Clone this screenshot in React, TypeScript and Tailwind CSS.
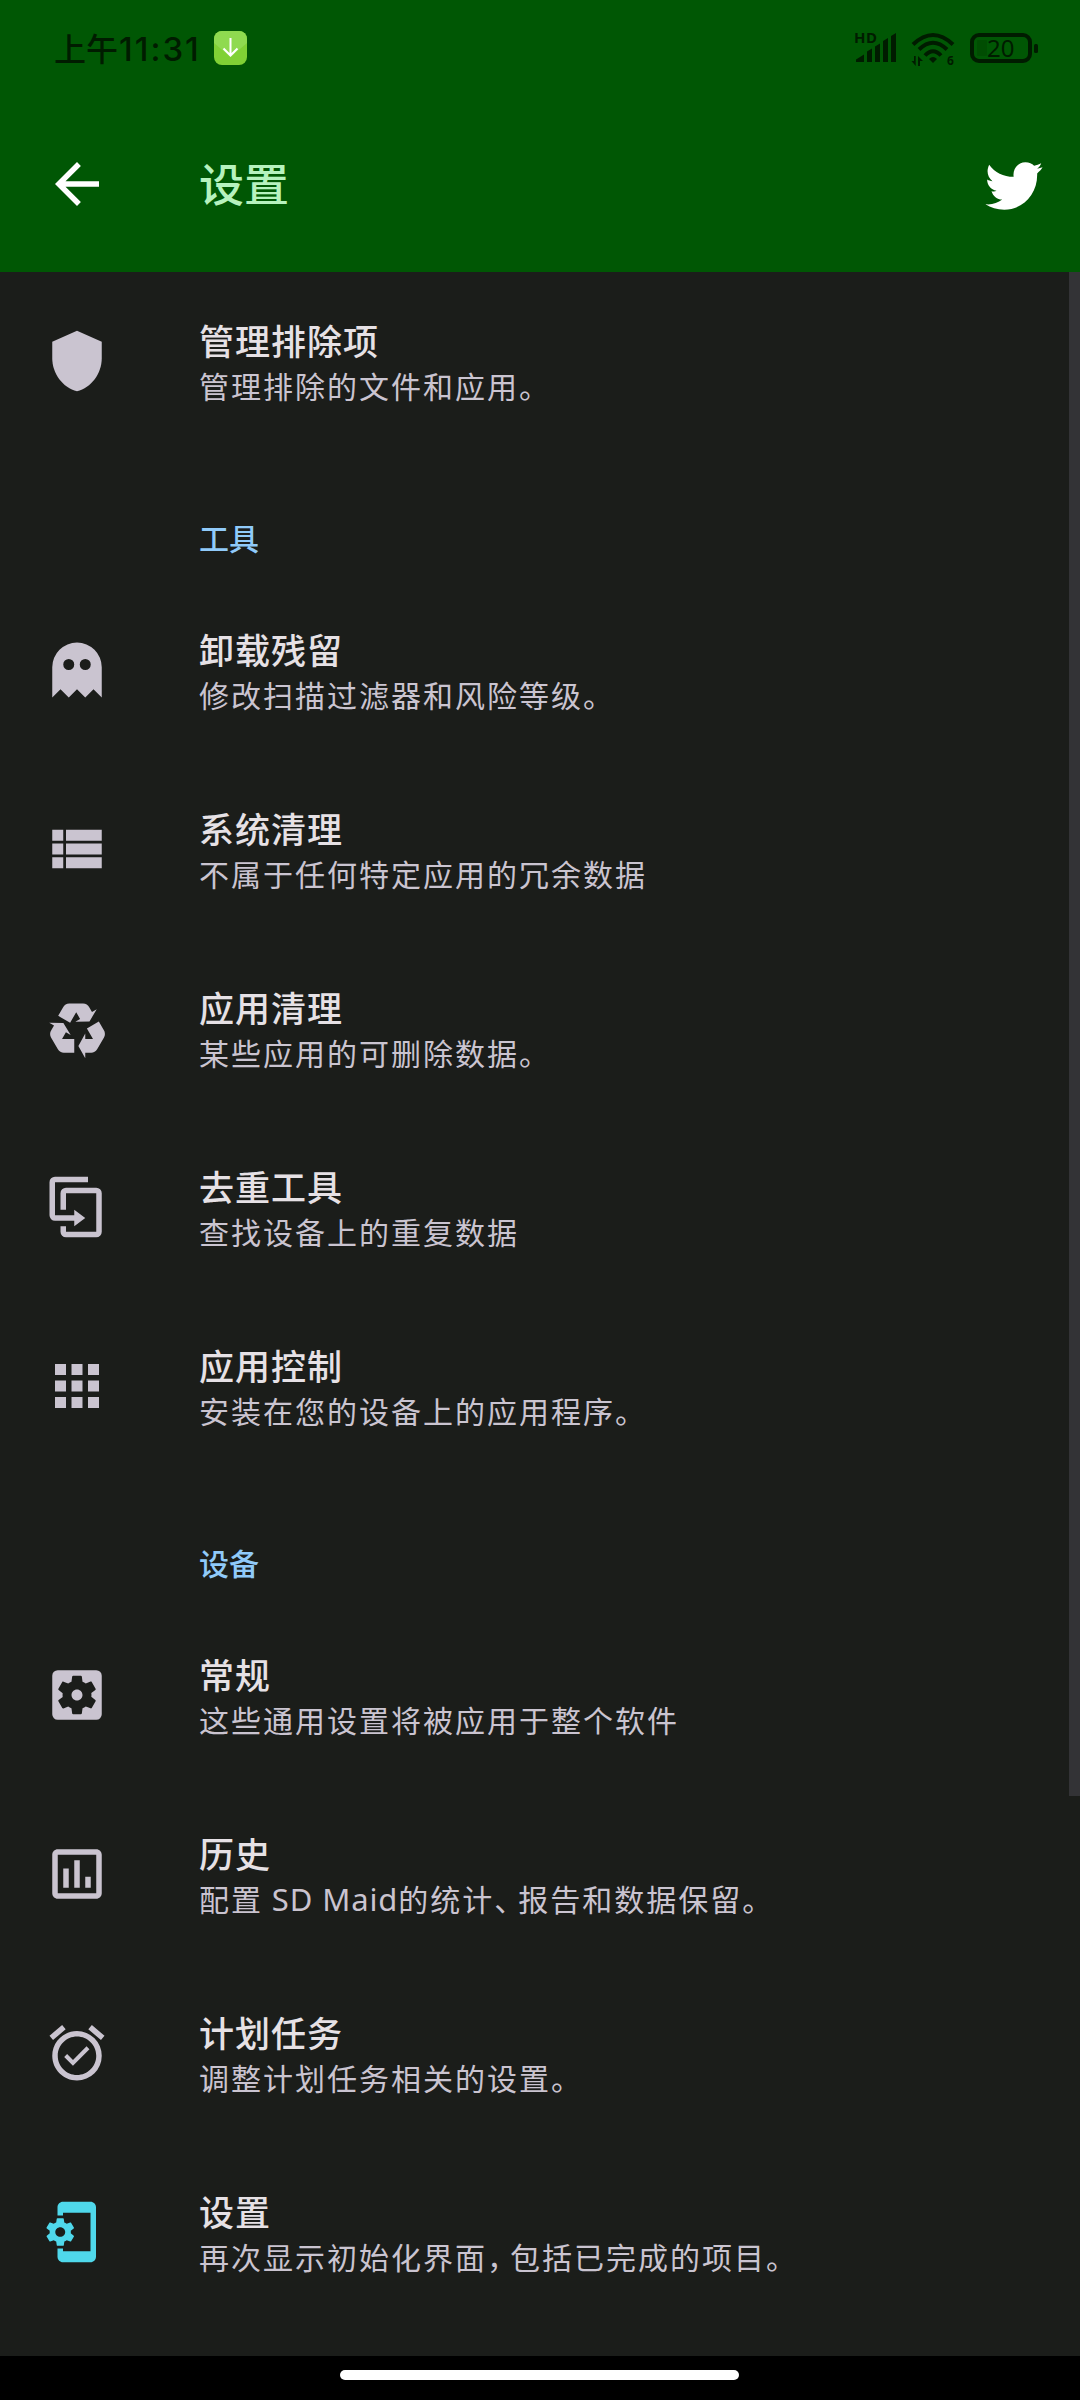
import type { ReactNode } from "react";
import {
  MdAlarmOn,
  MdApps,
  MdArrowBack,
  MdPhonelinkSetup,
  MdSettingsApplications,
  MdShield,
  MdViewList,
} from "react-icons/md";

function Glyph({ d }: { d: string }) {
  return (
    <svg viewBox="0 0 24 24" className="size-[66px]" fill="currentColor">
      <path d={d} />
    </svg>
  );
}

const ghost =
  "M12 2A9 9 0 0 0 3 11V22L6 19L9 22L12 19L15 22L18 19L21 22V11A9 9 0 0 0 12 2M9 8A2 2 0 0 1 11 10A2 2 0 0 1 9 12A2 2 0 0 1 7 10A2 2 0 0 1 9 8M15 8A2 2 0 0 1 17 10A2 2 0 0 1 15 12A2 2 0 0 1 13 10A2 2 0 0 1 15 8Z";
const recycle =
  "M21.82,15.42L19.32,19.75C18.83,20.61 17.92,21.06 17,21H15V23L12.5,18.5L15,14V16H17.82L15.6,12.15L19.93,9.65L21.73,12.77C22.25,13.54 22.32,14.57 21.82,15.42M9.21,3.06H14.21C15.19,3.06 16.04,3.63 16.45,4.45L17.45,6.19L19.18,5.19L16.54,9.6L11.39,9.69L13.12,8.69L11.71,6.24L9.5,10.09L5.16,7.59L6.96,4.47C7.37,3.64 8.22,3.06 9.21,3.06M5.05,19.76L2.55,15.43C2.06,14.58 2.13,13.56 2.64,12.79L3.64,11.06L1.91,10.06L7.05,10.14L9.7,14.56L7.97,13.56L6.56,16H11V21H7.4C6.47,21.07 5.55,20.61 5.05,19.76Z";
const duplicate =
  "M11,17H4A2,2 0 0,1 2,15V3A2,2 0 0,1 4,1H16V3H4V15H11V13L15,16L11,19V17M19,21V7H8V13H6V7A2,2 0 0,1 8,5H19A2,2 0 0,1 21,7V21A2,2 0 0,1 19,23H8A2,2 0 0,1 6,21V19H8V21H19Z";
const chart =
  "M9 17H7v-7h2v7zm4 0h-2V7h2v10zm4 0h-2v-4h2v4zm2 2H5V5h14v14zm0-16H5c-1.1 0-2 .9-2 2v14c0 1.1.9 2 2 2h14c1.1 0 2-.9 2-2V5c0-1.100-.9-2-2-2z";

function Row({ icon, title, text, accent }: { icon: ReactNode; title: string; text: ReactNode; accent?: boolean }) {
  return (
    <div className="flex h-[179px] items-center pb-0.5 pl-11">
      <div className={accent ? "mr-[92px] -ml-[3px] text-[#4fd8eb]" : "mr-[89px] text-[#cac4d0]"}>{icon}</div>
      <div className="whitespace-nowrap">
        <div className="text-[35px] leading-[48px] font-medium tracking-[1px] text-[#e6e1e5]">{title}</div>
        <div className="text-[30px] leading-[42px] tracking-[2px] text-[#cac4d0]">{text}</div>
      </div>
    </div>
  );
}

function Section({ children }: { children: ReactNode }) {
  return (
    <div className="flex h-[130px] items-end pb-[23px] pl-[199px] text-[30px] leading-[42px] font-medium text-[#90caf9]">
      {children}
    </div>
  );
}

function StatusBar() {
  return (
    <div className="flex h-24 items-center justify-between pl-[54px] pr-[34px] text-[#001c00]">
      <div className="flex items-center">
        <span className="flex w-[143px] items-baseline whitespace-nowrap text-[32px] leading-[40px] font-medium">
          上午
          <span className="pl-px font-['Inter',sans-serif] text-[33px] tracking-[2px]">11:31</span>
        </span>
        <svg viewBox="0 0 33 34" className="ml-[17px] h-[34px] w-[33px]" fill="none">
          <rect width="33" height="34" rx="8" fill="#80d135" />
          <path d="M0 12L16.500 26L33 12V8a8 8 0 0 0-8-8H8a8 8 0 0 0-8 8z" fill="#8fda50" />
          <path d="M16.500 7v17.500M9.500 17.500l7 7 7-7" stroke="#fff" strokeWidth="2" />
        </svg>
      </div>
      <svg viewBox="-8 -12 200 60" className="h-[60px] w-[200px]" fill="currentColor">
        <text x="0" y="13" fontSize="15" fontWeight="700" fontFamily="Noto Sans" letterSpacing="0.500">HD</text>
        <path d="M2 32v-2.500l8-5v7.500zM13 32V21.500l5-3v13.500zM21 32V16.500l5-3v18.500zM29 32V11l5-3v24zM37 32V6l5-3v29z" />
        <g fill="none" stroke="currentColor" strokeWidth="4">
          <path d="M59 14.500Q79-4.500 99 14.500M65 19.500Q79 6 93 19.500M71 25.500Q79 17 87 25.500" />
        </g>
        <path d="M75 29q4-4 8 0l-4 4z" />
        <path d="M57.500 31h2.500v-5h1.700v10zM64 26l5 5h-3v5h-2z" />
        <text x="93" y="35" fontSize="12" fontWeight="700" fontFamily="Noto Sans">6</text>
        <rect x="118" y="5" width="58" height="26" rx="7" fill="none" stroke="currentColor" strokeWidth="4" />
        <rect x="123" y="10" width="10" height="16" rx="1" fill="#004d02" />
        <rect x="180" y="14" width="4" height="9" rx="1.500" />
        <text x="133" y="27" fontSize="24" fontFamily="Noto Sans">20</text>
      </svg>
    </div>
  );
}

export default function App() {
  return (
    <div className="relative flex h-[2400px] w-[1080px] flex-col overflow-hidden bg-[#1b1d1a] font-['Noto_Sans_CJK_SC',sans-serif]">
      <header className="h-[272px] bg-[#005704]">
        <StatusBar />
        <div className="flex h-[176px] items-center pl-11 pr-[37px] text-white">
          <MdArrowBack className="size-[66px]" />
          <h1 className="ml-[89px] flex-1 pb-[3px] text-[45px] leading-[60px] font-medium text-[#b6f2be]">设置</h1>
          <svg viewBox="46 35 172 143" className="mt-[3px] h-12 w-[58px]" fill="currentColor">
            <path d="M58 43C75 66 100 79 131 79C127 54 145 36 166 36C177 36 186 40 192 46C199 45 207 42 213 39C211 45 207 51 201 55C207 54 212 53 217 51C213 58 208 63 201 69C203 130 160 177 103 177C82 177 62 171 47 161C66 163 83 158 97 147C81 146 70 137 65 122C71 123 76 123 80 121C63 117 52 104 52 87C57 90 62 91 68 92C53 81 49 62 58 43Z" />
          </svg>
        </div>
      </header>
      <main className="flex-1">
        <Row icon={<MdShield className="size-[66px]" />} title="管理排除项" text="管理排除的文件和应用。" />
        <Section>工具</Section>
        <Row icon={<Glyph d={ghost} />} title="卸载残留" text="修改扫描过滤器和风险等级。" />
        <Row icon={<MdViewList className="size-[66px]" />} title="系统清理" text="不属于任何特定应用的冗余数据" />
        <Row icon={<Glyph d={recycle} />} title="应用清理" text="某些应用的可删除数据。" />
        <Row icon={<Glyph d={duplicate} />} title="去重工具" text="查找设备上的重复数据" />
        <Row icon={<MdApps className="size-[66px]" />} title="应用控制" text="安装在您的设备上的应用程序。" />
        <Section>设备</Section>
        <Row icon={<MdSettingsApplications className="size-[66px]" />} title="常规" text="这些通用设置将被应用于整个软件" />
        <Row
          icon={<Glyph d={chart} />}
          title="历史"
          text={
            <>
              配置 <span className="font-['Noto_Sans'] text-[31px] leading-none tracking-[0.9px]">SD Maid</span>的统计
              <span className="tracking-[-6px]">、</span>报告和数据保留。
            </>
          }
        />
        <Row icon={<MdAlarmOn className="size-[66px]" />} title="计划任务" text="调整计划任务相关的设置。" />
        <Row
          icon={<MdPhonelinkSetup className="size-[66px]" />}
          title="设置"
          text={
            <>
              再次显示初始化界面<span className="tracking-[-7px]">，</span>包括已完成的项目。
            </>
          }
          accent
        />
      </main>
      <div className="absolute right-0 top-[272px] h-[1524px] w-[11px] bg-[#333336]" />
      <footer className="flex h-11 items-start justify-center bg-black pr-0.5 pt-3.5">
        <div className="h-2.5 w-[399px] rounded-full bg-white" />
      </footer>
    </div>
  );
}
